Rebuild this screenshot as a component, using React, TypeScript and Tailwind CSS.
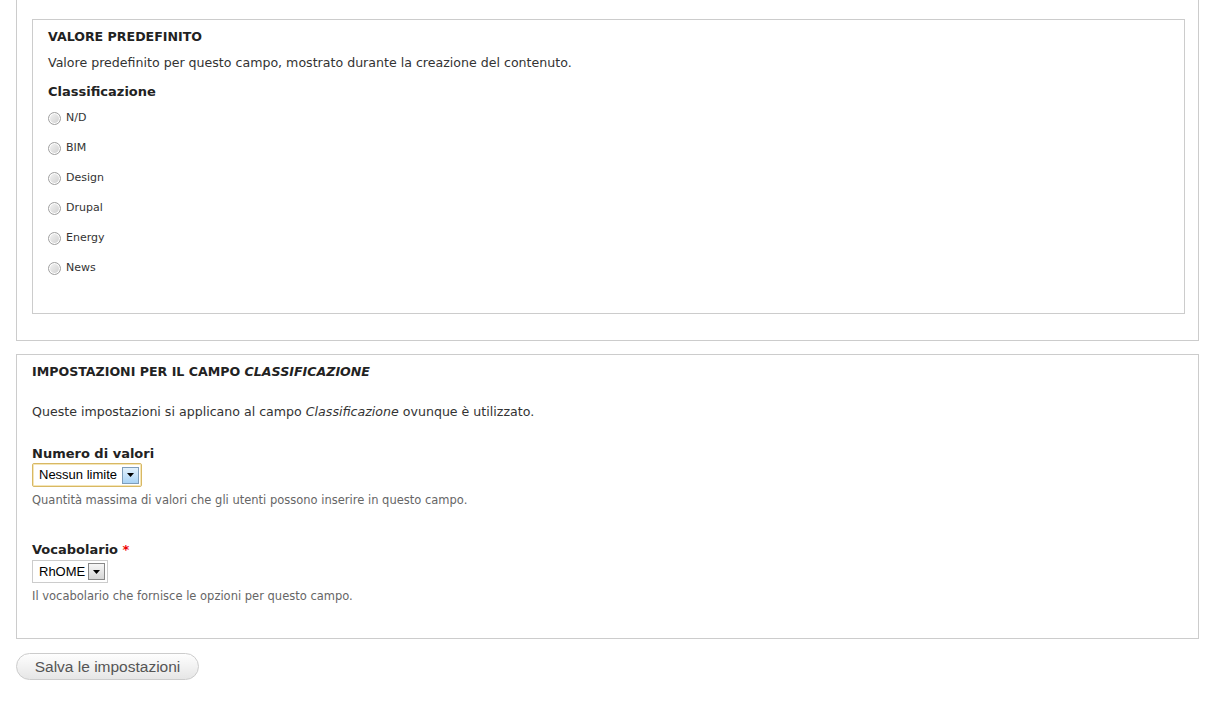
import React from "react";

const options = ["N/D", "BIM", "Design", "Drupal", "Energy", "News"];

function Radio({ label }: { label: string }) {
  return (
    <label className="flex h-[30px] items-center gap-[5px] text-[11px] text-[#333]">
      <span className="inline-block h-[13px] w-[13px] rounded-full border border-[#a0a0a0] bg-gradient-to-br from-[#f4f4f4] to-[#cfcfcf] shadow-[inset_0_0_0_1px_#fff]" />
      <span>{label}</span>
    </label>
  );
}

function Arrow({ blue }: { blue?: boolean }) {
  return (
    <span
      className={
        blue
          ? "flex h-[17px] w-[17px] items-center justify-center border border-[#7f9db9] bg-gradient-to-b from-[#e3f1fc] to-[#a9d3f5]"
          : "flex h-[17px] w-[17px] items-center justify-center border border-[#888] bg-gradient-to-b from-[#f6f6f6] to-[#d6d6d6]"
      }
    >
      <svg width="7" height="4" viewBox="0 0 7 4">
        <path d="M0 0h7L3.5 4z" fill="#000" />
      </svg>
    </span>
  );
}

export default function App() {
  return (
    <div className="min-h-[708px] bg-white pl-4 pr-[8px] font-['DejaVu_Sans',sans-serif] text-[#333]">
      {/* Valore predefinito */}
      <div className="border-x border-b border-[#ccc] pl-[15px] pr-[13px] pb-[26px] pt-[19px]">
        <div className="border border-[#ccc] pl-[15px] pt-[9px] pb-[30px]">
          <div className="text-[12.6px] font-bold leading-[16px] text-[#222]">VALORE PREDEFINITO</div>
          <p className="mt-[9px] text-[12.6px] leading-[18px]">
            Valore predefinito per questo campo, mostrato durante la creazione del contenuto.
          </p>
          <div className="mt-[11px] text-[13px] font-bold leading-[18px] text-[#222]">Classificazione</div>
          <div className="mt-[2px] flex flex-col">
            {options.map((o) => (
              <Radio key={o} label={o} />
            ))}
          </div>
        </div>
      </div>

      {/* Impostazioni campo */}
      <div className="mt-[13px] border border-[#ccc] pl-[15px] pt-[9px] pb-[35px]">
        <div className="text-[12.6px] font-bold leading-[16px] text-[#222]">
          IMPOSTAZIONI PER IL CAMPO <em>CLASSIFICAZIONE</em>
        </div>
        <p className="mt-[23px] text-[12.6px] leading-[18px]">
          Queste impostazioni si applicano al campo <em>Classificazione</em> ovunque è utilizzato.
        </p>

        <div className="mt-[24px] text-[13px] font-bold leading-[18px] text-[#222]">Numero di valori</div>
        <div className="flex h-[24px] w-[110px] items-center justify-between rounded-[2px] border border-[#d8b864] bg-white pl-[6px] pr-[2px] font-['Liberation_Sans',sans-serif] text-[13px] text-black shadow-[inset_0_0_0_1px_#f5e6b8]">
          <span>Nessun limite</span>
          <Arrow blue />
        </div>
        <p className="mt-[6px] text-[11.5px] leading-[14px] text-[#666]">
          Quantità massima di valori che gli utenti possono inserire in questo campo.
        </p>

        <div className="mt-[34px] text-[13px] font-bold leading-[18px] text-[#222]">
          Vocabolario <span className="text-[#e00]">*</span>
        </div>
        <div className="mt-[1px] flex h-[23px] w-[76px] items-center justify-between border border-[#ccc] bg-white pl-[6px] pr-[2px] font-['Liberation_Sans',sans-serif] text-[13px] text-black">
          <span>RhOME</span>
          <Arrow />
        </div>
        <p className="mt-[6px] text-[11.5px] leading-[14px] text-[#666]">
          Il vocabolario che fornisce le opzioni per questo campo.
        </p>
      </div>

      <button className="mt-[14px] h-[27px] w-[183px] rounded-full border border-[#ccc] bg-gradient-to-b from-[#fefefe] to-[#e6e6e6] font-['Liberation_Sans',sans-serif] text-[15.5px] text-[#555]">
        Salva le impostazioni
      </button>
    </div>
  );
}
